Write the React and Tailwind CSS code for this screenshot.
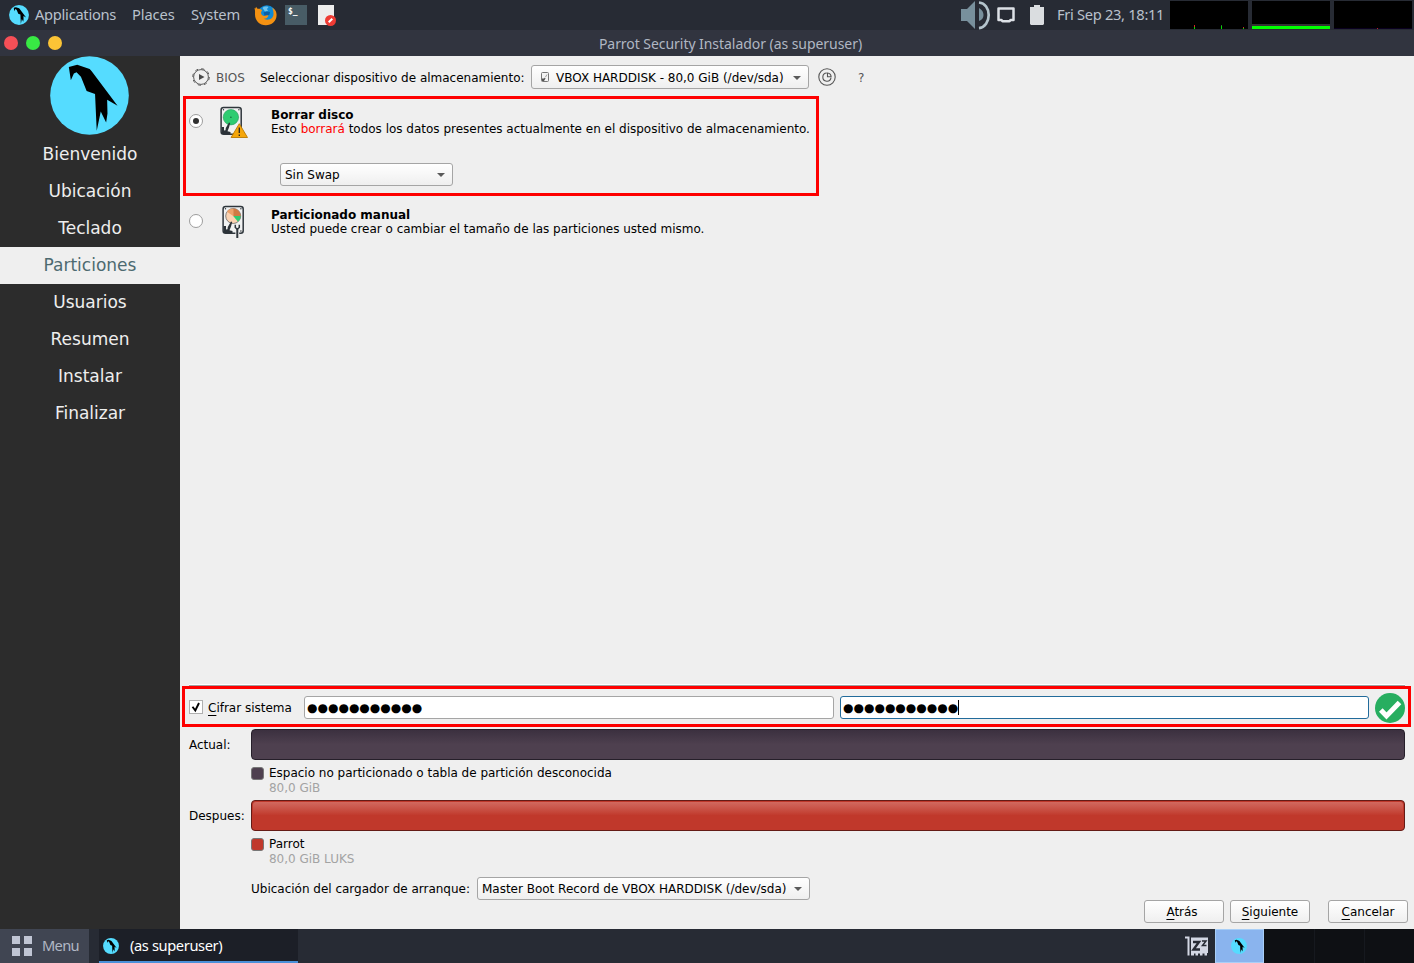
import React from "react";

const SYS = "font-['DejaVu_Sans',sans-serif]";
const PANEL = "font-['Noto_Sans',sans-serif]";

function Parrot({ className }) {
  return (
    <svg className={className} viewBox="151 169 235 235">
      <circle cx="268.5" cy="286.5" r="117" fill="#55dcff" />
      <path
        fill="#000"
        d="M207 202l25-7 37 13 6 6 77 103-31-18 1 41-4 27-16-33-12 57-5-109-25-9-17-42-13-14-8 4-9 20z"
      />
    </svg>
  );
}

function Firefox() {
  return (
    <svg className="h-6 w-6" viewBox="0 0 24 24">
      <circle cx="12.800" cy="11.500" r="9.300" fill="#0f8ad6" />
      <path fill="#6fc3ee" d="M8.500 5c1.500-1.500 4-1.800 6-1l-1.500 2 1 2-3 .5z" />
      <path fill="#0b5fa5" d="M9.500 9.500l3-1 3.500.5-.5 2.500-2 1.500-3-.5z" />
      <path
        fill="#f39112"
        d="M.500 5l1 .5L2 3.800l1.500 2c2-.3 3.500.2 4.500 1.400L7 9.500c0 2 1 3.200 3 3.400 1.500.2 2.700-.9 4.500-.4-.5 2-2.300 3.300-4.700 3.300 4.500 2.200 9.700.5 9.700-5 0-2.300-.5-4.300-1.500-6C21.300 6.300 22.600 9 22.600 12c0 6.300-5 10.300-10.800 10.300C5.500 22.300 1 17.500 1 11.500c0-2 .3-3.700-.500-6.500z"
      />
    </svg>
  );
}

function Editor() {
  return (
    <svg className="h-[22px] w-[20px]" viewBox="0 0 20 22">
      <path fill="#ededed" d="M1 1h16v20H1z" />
      <circle cx="13.500" cy="16.500" r="5.500" fill="#ee3b34" />
      <path d="M11.700 18.300l3.600-3.600" stroke="#fff" strokeWidth="2" />
    </svg>
  );
}

function Volume() {
  return (
    <svg className="h-[29px] w-[30px]" viewBox="0 0 30 29">
      <path fill="#78909c" d="M0 8h6l8-8v28l-8-8H0zM18 7q4.500 2.500 4.500 7T18 20z" />
      <path fill="none" stroke="#b4c4cc" strokeWidth="2.700" d="M18 1.500c6 .5 9.700 6 9.700 12.500S24 26.500 18 27.200" />
    </svg>
  );
}

function DiskIcon({ manual }) {
  return (
    <svg className="h-[34px] w-[32px] shrink-0" viewBox="0 0 32 34">
      <rect x="2.100" y="2.400" width="20.100" height="26.800" rx="2.500" fill="#f1f2f2" stroke="#2f363c" strokeWidth="1.500" />
      <circle cx="4.500" cy="4.700" r=".7" fill="#2b3238" />
      <circle cx="19.900" cy="4.700" r=".7" fill="#2b3238" />
      <circle cx="19.900" cy="27" r=".8" fill="#2b3238" />
      {manual ? (
        <g>
          <circle cx="12.200" cy="12" r="7.500" fill="#fbd3b2" stroke="#666" strokeWidth=".8" />
          <path fill="#cf7b43" d="M12.200 12V4.500a7.500 7.500 0 0 1 7.500 7.500z" />
          <path fill="#eda26b" d="M12.200 12L6 7.800a7.500 7.500 0 0 1 6.200-3.300z" />
          <path fill="#2ecc71" d="M12.200 12h7.500a7.500 7.500 0 0 1-2.700 5.700z" />
        </g>
      ) : (
        <g>
          <circle cx="11.900" cy="12.200" r="7.700" fill="#2ecc71" stroke="#25995a" strokeWidth=".6" />
          <circle cx="11.900" cy="12.200" r=".8" fill="#17663a" />
        </g>
      )}
      <path fill="#2b3238" d="M2.500 22H5v3.500l1.500-.3L6.800 23 10 17.500l1.200.4L10 22.500l-1.500 3.700 3 .8v2H2.500z" />
      {manual ? (
        <g fill="none" stroke="#2f363c">
          <path stroke="#efefef" strokeWidth="3.800" d="M16.300 24v10" />
          <path strokeWidth="1.500" d="M14.300 20.800v2.700l2 1.700 2-1.700v-2.700" />
          <path strokeWidth="2" d="M16.300 25v9" />
        </g>
      ) : (
        <g>
          <path fill="#f5a60a" stroke="#b87800" strokeWidth=".9" strokeLinejoin="round" d="M20.300 18.700l8.200 13.800H12.100z" />
          <path stroke="#222" strokeWidth="1.300" d="M20.300 22.500V28M20.300 29.500V31" />
        </g>
      )}
    </svg>
  );
}

function Combo({ className, icon, children }) {
  return (
    <div
      className={`flex items-center rounded-[3px] border border-[#a5a5a5] bg-gradient-to-b from-white to-[#efefef] pl-1 pr-[7px] text-black ${className}`}
    >
      {icon}
      <span>{children}</span>
      <svg className="ml-auto h-[4px] w-[8px]" viewBox="0 0 8 4">
        <path d="M0 0h8L4 4z" fill="#5a5a5a" />
      </svg>
    </div>
  );
}

function Button({ letter, rest, className }) {
  return (
    <button className={`h-[23px] w-20 rounded-[3px] border border-[#a5a5a5] bg-gradient-to-b from-white to-[#efefef] pt-px leading-[21px] ${className}`}>
      <span className="underline underline-offset-[3px]">{letter}</span>
      {rest}
    </button>
  );
}

function Legend({ color, name, size }) {
  return (
    <div className="ml-[71px] flex h-[40px] pt-[6px] leading-[15px]">
      <span className={`mt-px h-[13px] w-[13px] rounded-[3px] border border-[#777] ${color}`} />
      <div className="ml-[5px]">
        <div>{name}</div>
        <div className="text-[#a3a3a3]">{size}</div>
      </div>
    </div>
  );
}

const steps = ["Bienvenido", "Ubicación", "Teclado", "Particiones", "Usuarios", "Resumen", "Instalar", "Finalizar"];

function TopPanel() {
  return (
    <div className={`flex h-[30px] items-center bg-[#272b34] text-[14.700px] leading-[28px] tracking-[-0.280px] text-[#b9c1cc] ${PANEL}`}>
      <Parrot className="ml-[9px] h-5 w-5" />
      <span className="ml-[6px] w-[97px] pb-[2px]">Applications</span>
      <span className="w-[59px] pb-[2px] tracking-[-0.100px]">Places</span>
      <span className="w-[63px] pb-[2px] tracking-[-0.150px]">System</span>
      <Firefox />
      <div className="ml-[7px] h-5 w-[22px] bg-[#485c66] pl-[3px] pt-[2px] font-['DejaVu_Sans_Mono',monospace] text-[8px] font-bold leading-[10px] tracking-normal text-white">
        $_
      </div>
      <div className="ml-[10px]"><Editor /></div>
      <div className="ml-auto flex h-full items-center">
        <Volume />
        <svg className="ml-[5px] h-[18px] w-[20px]" viewBox="0 0 20 18">
          <path fill="none" stroke="#dde1e6" strokeWidth="2.500" strokeLinejoin="round" d="M2.500 2.500h15v11.500h-3l-1 1.300h-7L5.500 14h-3z" />
        </svg>
        <svg className="ml-[14px] h-5 w-[14px]" viewBox="0 0 14 20">
          <path fill="#dadde0" d="M4 0h6v2h4v17l-1 1H1l-1-1V2h4z" />
        </svg>
        <span className="ml-[13px] w-[113px] whitespace-nowrap pb-[2px] tracking-[-0.320px]">Fri Sep 23, 18:11</span>
        <div className="mr-[2px] flex gap-1">
          <svg className="h-7 w-[78px] bg-black" viewBox="0 0 78 28">
            <path fill="#0d0" d="M24 26h1v2h-1zM51 25h1v3h-1zM73 26h1v2h-1z" />
            <path fill="#d22" d="M24 24h1v2h-1zM73 26h1v1h-1z" />
            <path fill="#363" d="M51 24h1v1h-1z" />
          </svg>
          <svg className="h-7 w-[78px] bg-black" viewBox="0 0 78 28">
            <path fill="#333" d="M0 23h78v2H0z" />
            <path fill="#0f0" d="M0 25h78v3H0z" />
          </svg>
          <svg className="h-7 w-[78px] bg-black" viewBox="0 0 78 28">
            <path fill="#0a0020" d="M0 27h78v1H0z" />
            <path fill="#b22" d="M43 27h1v1h-1z" />
          </svg>
        </div>
      </div>
    </div>
  );
}

function Sidebar() {
  return (
    <div className="w-[180px] bg-[#2c2c2c] text-center text-[17px] leading-[37px] text-[#eee]">
      <Parrot className="mb-px ml-[50px] h-[79px] w-[79px]" />
      {steps.map((s) => (
        <div key={s} className={s === "Particiones" ? "h-[37px] bg-[#efefef] text-[#4d6a70]" : "h-[37px]"}>
          {s}
        </div>
      ))}
    </div>
  );
}

function Content() {
  return (
    <div className="flex w-[1234px] flex-col whitespace-nowrap bg-[#efefef] text-[12px] leading-[14px] tracking-[-0.010px] text-black">
      <div className="flex h-10 items-center pl-3 pt-[2px]">
        <svg className="h-[18px] w-[18px]" viewBox="0 0 18 18" fill="none" stroke="#5c5c5c">
          <circle cx="9" cy="9" r="7.400" />
          <circle cx="9" cy="9" r="8.300" strokeDasharray="3.260 3.260" />
          <path d="M7 6l5.500 3L7 12z" fill="#4a4a4a" stroke="none" />
        </svg>
        <span className="ml-[6px] w-[44px] pt-[2px] text-[#555]">BIOS</span>
        <span className="w-[271px] pt-[2px]">Seleccionar dispositivo de almacenamiento:</span>
        <Combo
          className="h-6 w-[278px] pt-px"
          icon={
            <svg className="mb-[2px] ml-[5px] mr-[6px] h-[10px] w-[9px]" viewBox="0 0 9 10">
              <rect x=".5" y=".5" width="7" height="9" rx="1" fill="#f4f4f4" stroke="#777" />
              <path fill="none" stroke="#888" strokeWidth=".8" d="M6 2.500L4.500 5" />
              <path fill="#555" d="M1 6.500h2l1-1 .5 1L3 9H1z" />
            </svg>
          }
        >
          VBOX HARDDISK - 80,0 GiB (/dev/sda)
        </Combo>
        <svg className="ml-[9px] h-[18px] w-[18px]" viewBox="0 0 18 18" fill="none" stroke="#555" strokeWidth="1.100">
          <circle cx="9" cy="9" r="8.200" />
          <path d="M8.800 5a4.100 4.100 0 1 0 4.200 4.600" />
          <path d="M9.500 5v3.800h3.600A4 4 0 0 0 9.500 5z" />
        </svg>
        <span className="ml-[22px] pt-[2px] text-[#555]">?</span>
      </div>

      <div className="ml-[3px] h-[100px] w-[636px] border-[3px] border-[#fe0000]">
        <div className="flex pl-[3px]">
          <span className="mt-[15px] flex h-[14px] w-[14px] items-center justify-center rounded-full border border-[#9d9d9d] bg-white">
            <span className="h-[6px] w-[6px] rounded-full bg-[#303030]" />
          </span>
          <div className="ml-[16px] mt-[6px]"><DiskIcon /></div>
          <div className="ml-[20px] pt-[9px]">
            <div className="font-bold">Borrar disco</div>
            <div>
              Esto <span className="text-[#fe0000]">borrará</span> todos los datos presentes actualmente en el dispositivo de almacenamiento.
            </div>
          </div>
        </div>
        <Combo className="ml-[94px] mt-[24px] h-[23px] w-[173px]">Sin Swap</Combo>
      </div>
      <div className="flex pl-[9px]">
        <span className="mt-[18px] h-[14px] w-[14px] rounded-full border border-[#9d9d9d] bg-white" />
        <div className="ml-[18px] mt-[8px]"><DiskIcon manual /></div>
        <div className="ml-[18px] pt-[12px]">
          <div className="font-bold">Particionado manual</div>
          <div>Usted puede crear o cambiar el tamaño de las particiones usted mismo.</div>
        </div>
      </div>

      <div className="mx-[9px] mt-auto h-[2px] border-b border-t border-b-[#a0a0a0] border-t-white" />
      <div className="ml-[2px] flex h-[41px] w-[1229px] items-center border-[3px] border-[#fe0000] pl-1 pt-[2px]">
        <svg className="mb-px h-[14px] w-[14px]" viewBox="0 0 14 14">
          <rect x=".5" y=".5" width="13" height="13" fill="#fff" stroke="#b0b0b0" />
          <path fill="none" stroke="#000" strokeWidth="1.900" d="M3.500 6.700l2.800 3.800L10 3" />
        </svg>
        <span className="ml-[5px] w-[96px]">
          <span className="underline underline-offset-[3px]">C</span>ifrar sistema
        </span>
        <div className="flex h-[23px] w-[530px] items-center rounded-[3px] border border-[#a5a5a5] bg-white pl-[2px] tracking-normal">
          ●●●●●●●●●●●
        </div>
        <div className="ml-[6px] flex h-[23px] w-[529px] items-center rounded-[3px] border border-[#226b9b] bg-white pl-[2px] tracking-normal">
          ●●●●●●●●●●●
          <span className="h-[15px] w-px bg-black" />
        </div>
        <svg className="ml-[6px] h-[30px] w-[30px]" viewBox="0 0 30 30">
          <circle cx="15" cy="15" r="15" fill="#27ae60" />
          <path d="M5.800 17l5.700 6L24.500 9.500" fill="none" stroke="#fff" strokeWidth="5" />
        </svg>
      </div>

      <div className="mt-[2px] flex h-[31px] items-center pl-[9px]">
        <span className="w-[62px]">Actual:</span>
        <div className="h-[31px] w-[1154px] rounded-[4px] border border-[#261f2a] bg-gradient-to-b from-[#3b303f] to-[#4e404f] to-50%" />
      </div>
      <Legend color="bg-[#4e404f]" name="Espacio no particionado o tabla de partición desconocida" size="80,0 GiB" />
      <div className="flex h-[31px] items-center pl-[9px]">
        <span className="w-[62px]">Despues:</span>
        <div className="h-[31px] w-[1154px] rounded-[4px] border border-[#641b16] bg-[#c0382b] p-px">
          <div className="h-full rounded-[3px] bg-gradient-to-b from-[#d2695f] to-[#c0382b] to-50%" />
        </div>
      </div>
      <Legend color="bg-[#c0382b]" name="Parrot" size="80,0 GiB LUKS" />
      <div className="mt-[6px] flex items-center pl-[71px]">
        <span className="w-[226px]">Ubicación del cargador de arranque:</span>
        <Combo className="h-[23px] w-[333px]">Master Boot Record de VBOX HARDDISK (/dev/sda)</Combo>
      </div>
      <div className="mb-[6px] flex justify-end pr-[6px]">
        <Button letter="A" rest="trás" className="pr-1" />
        <span className="w-[6px]" />
        <Button letter="S" rest="iguiente" />
        <span className="w-[18px]" />
        <Button letter="C" rest="ancelar" />
      </div>
    </div>
  );
}

function Taskbar() {
  return (
    <div className={`flex h-[34px] bg-[#272b34] text-[14.700px] leading-[32px] tracking-[-0.400px] ${PANEL}`}>
      <div className="flex w-[89px] items-center bg-[#404552] pl-3 text-[#b0b7c4]">
        <div className="grid grid-cols-2 gap-1">
          <span className="h-2 w-2 bg-[#c0c5d4]" />
          <span className="h-2 w-2 bg-[#c0c5d4]" />
          <span className="h-2 w-2 bg-[#c0c5d4]" />
          <span className="h-2 w-2 bg-[#c0c5d4]" />
        </div>
        <span className="ml-[10px] pb-[2px] tracking-[-0.700px]">Menu</span>
      </div>
      <div className="ml-[10px] flex w-[199px] items-center border-b-2 border-[#4a90d9] bg-[#1c1f27] pl-1 text-white">
        <Parrot className="mt-px h-4 w-4" />
        <span className="ml-[11px]">(as superuser)</span>
      </div>
      <svg className="ml-auto mr-[7px] mt-[7px] h-[21px] w-[23px]" viewBox="0 0 23 21">
        <path fill="none" stroke="#d3d7e3" strokeWidth="2" d="M0 1.500h3.500v18" />
        <path fill="#d3d7e3" d="M6 1.500h17V17h-1v2.500h-2.500V17.500h-2v2H15v-2h-2v2h-2.500v-2H9v2H6z" />
        <path fill="none" stroke="#272b34" strokeWidth="2.400" d="M8 6h6l-5.500 7.500h6.500" />
        <path fill="none" stroke="#272b34" strokeWidth="1.500" d="M17 5h4l-3.500 4.500h4" />
      </svg>
      <div className="flex w-[49px] items-center justify-center border border-[#a9cff7] bg-[#8ab4ee]">
        <Parrot className="mr-[2px] h-4 w-4" />
      </div>
      <div className="flex w-[150px] bg-[#0e1014]">
        <span className="w-[51px] border-r border-[#16191f]" />
        <span className="w-[50px] border-r border-[#16191f]" />
      </div>
    </div>
  );
}

export default function App() {
  return (
    <div className={`flex h-[963px] w-[1414px] flex-col overflow-hidden ${SYS}`}>
      <TopPanel />
      <div className={`relative flex h-[26px] items-center justify-center bg-[#31343f] pl-[47px] text-[14px] tracking-[-0.050px] text-[#b0b7c3] ${PANEL}`}>
        <div className="absolute left-[4px] top-[6px] flex gap-2">
          <span className="h-[14px] w-[14px] rounded-full bg-[#f64f57]" />
          <span className="h-[14px] w-[14px] rounded-full bg-[#38e944]" />
          <span className="h-[14px] w-[14px] rounded-full bg-[#fcc436]" />
        </div>
        Parrot Security Instalador (as superuser)
      </div>
      <div className="flex h-[873px]">
        <Sidebar />
        <Content />
      </div>
      <Taskbar />
    </div>
  );
}
